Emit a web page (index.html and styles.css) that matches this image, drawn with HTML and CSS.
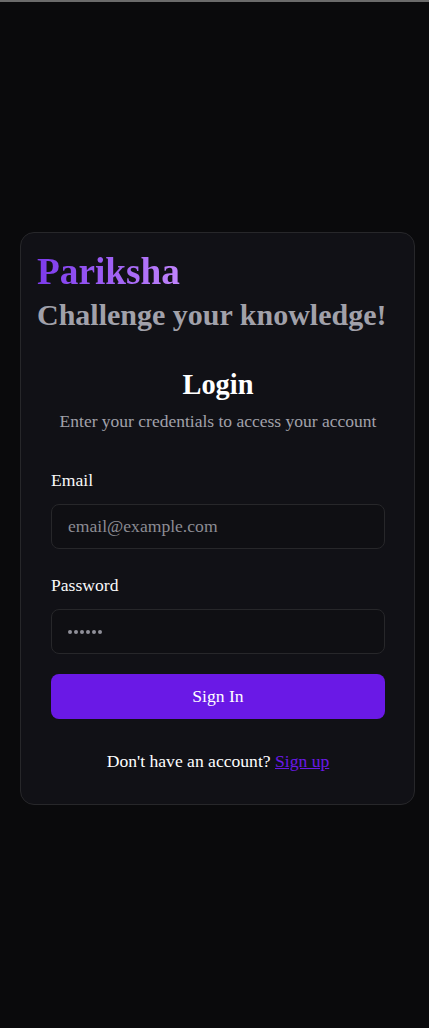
FILE: index.html
```html
<!DOCTYPE html>
<html lang="en">
<head>
<meta charset="utf-8">
<title>Pariksha - Login</title>
<link rel="stylesheet" href="styles.css">
</head>
<body>
<div class="topline"></div>
<main class="page">
  <section class="card">
    <div class="brand">
      <h1 class="brand-name">Pariksha</h1>
      <h2 class="brand-tag">Challenge your knowledge!</h2>
    </div>
    <div class="login">
      <div class="login-head">
        <h3 class="login-title">Login</h3>
        <p class="login-sub">Enter your credentials to access your account</p>
      </div>
      <form class="form">
        <div class="fields">
          <div class="field">
            <label class="label" for="email">Email</label>
            <input class="input" id="email" type="email" placeholder="email@example.com">
          </div>
          <div class="field">
            <label class="label" for="pw">Password</label>
            <div class="input pw" id="pw"><span class="dots"><i></i><i></i><i></i><i></i><i></i><i></i></span></div>
          </div>
        </div>
        <button class="btn" type="button">Sign In</button>
      </form>
      <p class="footer">Don't have an account? <a href="#" class="link">Sign up</a></p>
    </div>
  </section>
</main>
</body>
</html>
```
FILE: styles.css
```css
* { box-sizing: border-box; }
html, body { margin: 0; padding: 0; }
body {
  background: #0a0a0c;
  font-family: "Liberation Serif", "Times New Roman", serif;
  color: #fafafa;
  min-height: 1028px;
}
.topline { height: 2px; background: #6b6b6b; }
.page {
  min-height: 1026px;
  display: flex;
  align-items: center;
  justify-content: flex-start;
  padding: 7px 0 0 20px;
}
.card {
  width: 395px;
  background: #111116;
  border: 1px solid #27272a;
  border-radius: 14px;
  padding: 17px 0 32px 0;
}
.brand { padding: 0 16px; }
.brand-name {
  margin: 0;
  font-size: 37.3px;
  line-height: 43px;
  font-weight: 700;
  background: linear-gradient(90deg, #7c3aed, #c084fc);
  -webkit-background-clip: text;
  background-clip: text;
  color: transparent;
  display: inline-block;
}
.brand-tag {
  margin: 0;
  font-size: 30px;
  line-height: 44px;
  font-weight: 700;
  color: #a1a1aa;
}
.login { padding: 0 29px 0 30px; }
.login-head { text-align: center; padding-top: 31px; }
.login-title {
  margin: 0;
  font-size: 28.4px;
  line-height: 34px;
  font-weight: 700;
  color: #ffffff;
}
.login-sub {
  margin: 7px 0 0;
  font-size: 17.5px;
  line-height: 24px;
  color: #a1a1aa;
}
.form { display: flex; flex-direction: column; gap: 20px; margin-top: 37px; }
.fields { display: flex; flex-direction: column; gap: 26px; }
.field { display: flex; flex-direction: column; gap: 14px; }
.label { font-size: 17.6px; line-height: 20px; color: #fafafa; }
.input {
  height: 45px;
  width: 100%;
  background: #0f0f13;
  border: 1px solid #27272a;
  border-radius: 8px;
  padding: 0 16px;
  font-family: inherit;
  font-size: 17.6px;
  color: #fafafa;
  outline: none;
}
.input::placeholder { color: #8c8c94; }
.pw { display: flex; align-items: center; }
.dots { display: flex; gap: 2px; }
.dots i { width: 4px; height: 4px; border-radius: 50%; background: #8f8f99; display: block; }
.btn {
  height: 45px;
  width: 100%;
  border: none;
  border-radius: 8px;
  background: #6a19e6;
  color: #ffffff;
  font-family: inherit;
  font-size: 17.6px;
}
.footer {
  margin: 31px 0 0;
  text-align: center;
  font-size: 17.6px;
  line-height: 22px;
  color: #ffffff;
}
.link { color: #6a19e6; text-decoration: underline; }
```
